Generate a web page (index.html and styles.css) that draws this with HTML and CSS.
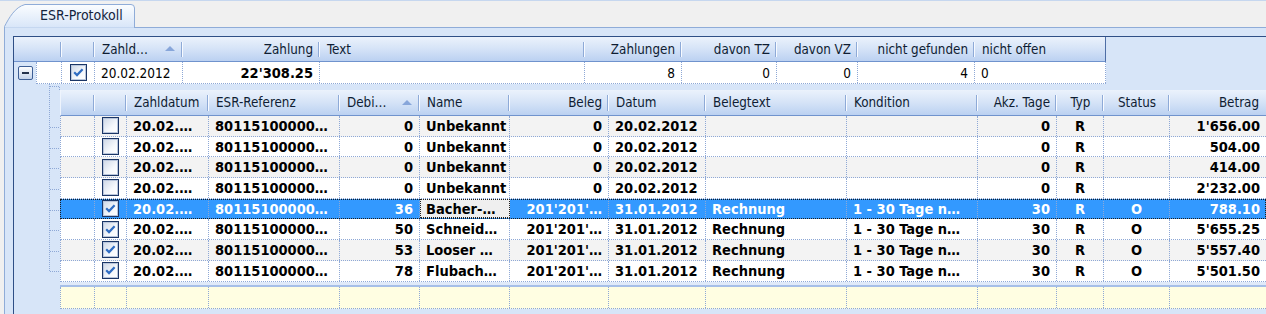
FILE: index.html
```html
<!DOCTYPE html>
<html>
<head>
<meta charset="utf-8">
<link rel="stylesheet" href="styles.css">
</head>
<body>
<div class="tabstrip">
  <div class="tab">
    <svg class="tabshape" width="132" height="24" viewBox="0 0 132 24">
      <defs>
        <linearGradient id="tg" x1="0" y1="0" x2="0" y2="1">
          <stop offset="0" stop-color="#fbfdff"/>
          <stop offset="1" stop-color="#d7e5f8"/>
        </linearGradient>
      </defs>
      <path d="M0.5 24 L0.5 22.5 C5 14 11 3 21 0.5 L127 0.5 Q130.5 0.5 130.5 4 L130.5 24 Z" fill="url(#tg)" stroke="#8facd8"/>
      <path d="M1 24 L130 24" stroke="#d7e5f8"/>
    </svg>
    <span class="tablabel">ESR-Protokoll</span>
  </div>
</div>
<div class="panel">
  <div class="grid">
    <div class="phead">
      <div class="hc pw0"></div>
      <div class="hc pw1"></div>
      <div class="hc pw2 sort"><span>Zahld…</span><i class="arrow"></i></div>
      <div class="hc pw3 r">Zahlung</div>
      <div class="hc pw4">Text</div>
      <div class="hc pw5 r">Zahlungen</div>
      <div class="hc pw6 r">davon TZ</div>
      <div class="hc pw7 r">davon VZ</div>
      <div class="hc pw8 r">nicht gefunden</div>
      <div class="hc pw9 last">nicht offen</div>
    </div>
    <div class="pwrap">
      <div class="exp"><span class="expbox"><span class="minus"></span></span></div>
      <div class="prow">
        <div class="c pd0"></div>
        <div class="c pw1 ctr nopad"><span class="cb"><svg width="13" height="13" viewBox="0 0 13 13"><path d="M2.2 6.3 L5 9.1 L10.6 3.2" fill="none" stroke="#2f6cc2" stroke-width="2.2"/></svg></span></div>
        <div class="c pw2">20.02.2012</div>
        <div class="c pw3 r b">22'308.25</div>
        <div class="c pw4"></div>
        <div class="c pw5 r">8</div>
        <div class="c pw6 r">0</div>
        <div class="c pw7 r">0</div>
        <div class="c pw8 r">4</div>
        <div class="c pw9">0</div>
      </div>
    </div>
    <div class="child">
      <svg class="tree" width="46" height="200" viewBox="0 0 46 200">
        <g stroke="#8ea8d6" stroke-width="1" stroke-dasharray="1 1" fill="none" shape-rendering="crispEdges">
          <path d="M35.5 0 V188"/>
          <path d="M35.5 2.5 H46"/>
          <path d="M45.5 2.5 V6"/>
          <path d="M36 43.5 H46"/>
          <path d="M36 64.5 H46"/>
          <path d="M36 84.5 H46"/>
          <path d="M36 105.5 H46"/>
          <path d="M36 126.5 H46"/>
          <path d="M36 146.5 H46"/>
          <path d="M36 167.5 H46"/>
          <path d="M36 187.5 H46"/>
        </g>
      </svg>
      <div class="cgrid">
        <div class="chead">
          <div class="hc k0"></div>
          <div class="hc k1"></div>
          <div class="hc k2">Zahldatum</div>
          <div class="hc k3">ESR-Referenz</div>
          <div class="hc k4 sort"><span>Debi…</span><i class="arrow"></i></div>
          <div class="hc k5">Name</div>
          <div class="hc k6 r">Beleg</div>
          <div class="hc k7">Datum</div>
          <div class="hc k8">Belegtext</div>
          <div class="hc k9">Kondition</div>
          <div class="hc k10 r">Akz. Tage</div>
          <div class="hc k11 ctr">Typ</div>
          <div class="hc k12 ctr">Status</div>
          <div class="hc k13 r last">Betrag</div>
        </div>

        <div class="row alt">
          <div class="c k0"></div>
          <div class="c k1 ctr nopad"><span class="cb"></span></div>
          <div class="c k2">20.02.…</div>
          <div class="c k3">80115100000…</div>
          <div class="c k4 r">0</div>
          <div class="c k5">Unbekannt</div>
          <div class="c k6 r">0</div>
          <div class="c k7">20.02.2012</div>
          <div class="c k8"></div>
          <div class="c k9"></div>
          <div class="c k10 r">0</div>
          <div class="c k11 ctr">R</div>
          <div class="c k12 ctr"></div>
          <div class="c k13 r">1'656.00</div>
        </div>
        <div class="row">
          <div class="c k0"></div>
          <div class="c k1 ctr nopad"><span class="cb"></span></div>
          <div class="c k2">20.02.…</div>
          <div class="c k3">80115100000…</div>
          <div class="c k4 r">0</div>
          <div class="c k5">Unbekannt</div>
          <div class="c k6 r">0</div>
          <div class="c k7">20.02.2012</div>
          <div class="c k8"></div>
          <div class="c k9"></div>
          <div class="c k10 r">0</div>
          <div class="c k11 ctr">R</div>
          <div class="c k12 ctr"></div>
          <div class="c k13 r">504.00</div>
        </div>
        <div class="row alt">
          <div class="c k0"></div>
          <div class="c k1 ctr nopad"><span class="cb"></span></div>
          <div class="c k2">20.02.…</div>
          <div class="c k3">80115100000…</div>
          <div class="c k4 r">0</div>
          <div class="c k5">Unbekannt</div>
          <div class="c k6 r">0</div>
          <div class="c k7">20.02.2012</div>
          <div class="c k8"></div>
          <div class="c k9"></div>
          <div class="c k10 r">0</div>
          <div class="c k11 ctr">R</div>
          <div class="c k12 ctr"></div>
          <div class="c k13 r">414.00</div>
        </div>
        <div class="row">
          <div class="c k0"></div>
          <div class="c k1 ctr nopad"><span class="cb"></span></div>
          <div class="c k2">20.02.…</div>
          <div class="c k3">80115100000…</div>
          <div class="c k4 r">0</div>
          <div class="c k5">Unbekannt</div>
          <div class="c k6 r">0</div>
          <div class="c k7">20.02.2012</div>
          <div class="c k8"></div>
          <div class="c k9"></div>
          <div class="c k10 r">0</div>
          <div class="c k11 ctr">R</div>
          <div class="c k12 ctr"></div>
          <div class="c k13 r">2'232.00</div>
        </div>
        <div class="row sel">
          <div class="c k0"></div>
          <div class="c k1 ctr nopad"><span class="cb"><svg width="13" height="13" viewBox="0 0 13 13"><path d="M2.2 6.3 L5 9.1 L10.6 3.2" fill="none" stroke="#2f6cc2" stroke-width="2.2"/></svg></span></div>
          <div class="c k2">20.02.…</div>
          <div class="c k3">80115100000…</div>
          <div class="c k4 r">36</div>
          <div class="c k5 focus">Bacher-…</div>
          <div class="c k6 r">201'201'…</div>
          <div class="c k7">31.01.2012</div>
          <div class="c k8">Rechnung</div>
          <div class="c k9">1 - 30 Tage n…</div>
          <div class="c k10 r">30</div>
          <div class="c k11 ctr">R</div>
          <div class="c k12 ctr">O</div>
          <div class="c k13 r">788.10</div>
        </div>
        <div class="row">
          <div class="c k0"></div>
          <div class="c k1 ctr nopad"><span class="cb"><svg width="13" height="13" viewBox="0 0 13 13"><path d="M2.2 6.3 L5 9.1 L10.6 3.2" fill="none" stroke="#2f6cc2" stroke-width="2.2"/></svg></span></div>
          <div class="c k2">20.02.…</div>
          <div class="c k3">80115100000…</div>
          <div class="c k4 r">50</div>
          <div class="c k5">Schneid…</div>
          <div class="c k6 r">201'201'…</div>
          <div class="c k7">31.01.2012</div>
          <div class="c k8">Rechnung</div>
          <div class="c k9">1 - 30 Tage n…</div>
          <div class="c k10 r">30</div>
          <div class="c k11 ctr">R</div>
          <div class="c k12 ctr">O</div>
          <div class="c k13 r">5'655.25</div>
        </div>
        <div class="row alt">
          <div class="c k0"></div>
          <div class="c k1 ctr nopad"><span class="cb"><svg width="13" height="13" viewBox="0 0 13 13"><path d="M2.2 6.3 L5 9.1 L10.6 3.2" fill="none" stroke="#2f6cc2" stroke-width="2.2"/></svg></span></div>
          <div class="c k2">20.02.…</div>
          <div class="c k3">80115100000…</div>
          <div class="c k4 r">53</div>
          <div class="c k5">Looser …</div>
          <div class="c k6 r">201'201'…</div>
          <div class="c k7">31.01.2012</div>
          <div class="c k8">Rechnung</div>
          <div class="c k9">1 - 30 Tage n…</div>
          <div class="c k10 r">30</div>
          <div class="c k11 ctr">R</div>
          <div class="c k12 ctr">O</div>
          <div class="c k13 r">5'557.40</div>
        </div>
        <div class="row">
          <div class="c k0"></div>
          <div class="c k1 ctr nopad"><span class="cb"><svg width="13" height="13" viewBox="0 0 13 13"><path d="M2.2 6.3 L5 9.1 L10.6 3.2" fill="none" stroke="#2f6cc2" stroke-width="2.2"/></svg></span></div>
          <div class="c k2">20.02.…</div>
          <div class="c k3">80115100000…</div>
          <div class="c k4 r">78</div>
          <div class="c k5">Flubach…</div>
          <div class="c k6 r">201'201'…</div>
          <div class="c k7">31.01.2012</div>
          <div class="c k8">Rechnung</div>
          <div class="c k9">1 - 30 Tage n…</div>
          <div class="c k10 r">30</div>
          <div class="c k11 ctr">R</div>
          <div class="c k12 ctr">O</div>
          <div class="c k13 r">5'501.50</div>
        </div>

        <div class="newsep"></div>
        <div class="row newrow">
          <div class="c k0"></div>
          <div class="c k1"></div>
          <div class="c k2"></div>
          <div class="c k3"></div>
          <div class="c k4"></div>
          <div class="c k5"></div>
          <div class="c k6"></div>
          <div class="c k7"></div>
          <div class="c k8"></div>
          <div class="c k9"></div>
          <div class="c k10"></div>
          <div class="c k11"></div>
          <div class="c k12"></div>
          <div class="c k13"></div>
        </div>
      </div>
    </div>
  </div>
</div>
</body>
</html>
```

FILE: styles.css
```css
* { box-sizing: border-box; }
html, body { margin: 0; padding: 0; }
body {
  width: 1266px;
  height: 314px;
  overflow: hidden;
  background: #f0f0f0;
  font-family: "DejaVu Sans Condensed", "DejaVu Sans", sans-serif;
  font-stretch: condensed;
  font-size: 13px;
  color: #000;
}

/* tab strip */
.tabstrip {
  height: 27px;
  border-top: 1px solid #c6d7ef;
  padding: 3px 0 0 4px;
  display: flex;
}
.tab {
  position: relative;
  z-index: 1;
  width: 132px;
  height: 24px;
  flex: none;
}
.tabshape { position: absolute; left: 0; top: 0; display: block; }
.tablabel {
  position: relative;
  display: block;
  padding-left: 36px;
  line-height: 23px;
  font-size: 14px;
  color: #14243d;
}

/* panel + grid */
.panel {
  height: 287px;
  margin-left: 4px;
  border-left: 1px solid #8facd8;
  border-top: 1px solid #8facd8;
  background: #d7e5f8;
  padding: 8px 0 0 8px;
}
.grid {
  height: 100%;
  width: 1262px;
  border-left: 1px solid #2f4f86;
  border-top: 1px solid #2f4f86;
  background: #d7e5f8;
  overflow: hidden;
}

/* headers */
.phead, .chead {
  display: flex;
  background: linear-gradient(#ebf2fc, #d5e3f7 50%, #bbd1f1);
  border-bottom: 1px solid #7093cd;
  color: #0f1d33;
  font-size: 13.3px;
}
.phead { height: 25px; width: 1092px; border-right: 1px solid #4e6ea6; }
.chead { height: 26px; border-left: 1px solid #eef4fd; }
.hc {
  position: relative;
  flex: none;
  display: flex;
  align-items: center;
  padding: 0 7px;
  white-space: nowrap;
  overflow: hidden;
}
.hc::after {
  content: "";
  position: absolute;
  right: 1px;
  top: 5px;
  bottom: 4px;
  width: 1px;
  background: #8eaad7;
  box-shadow: 1px 0 0 #f7faff;
}
.hc.last::after { display: none; }
.hc.r { justify-content: flex-end; }
.hc.ctr { justify-content: center; }
.hc.sort { justify-content: space-between; }
.arrow {
  width: 0;
  height: 0;
  border-left: 5px solid transparent;
  border-right: 5px solid transparent;
  border-bottom: 5px solid #87a6da;
  margin-right: 1px;
  margin-top: -1px;
}

/* parent columns */
.pw0 { width: 48px; }
.pd0 { width: 25px; }
.pw1 { width: 33px; }
.pw2 { width: 88px; }
.pw3 { width: 137px; }
.pw4 { width: 265px; }
.pw5 { width: 97px; }
.pw6 { width: 95px; }
.pw7 { width: 81px; }
.pw8 { width: 117px; }
.pw9 { width: 131px; }
.phead .pw9 { width: 130px; }

/* parent row */
.pwrap { display: flex; height: 22px; }
.exp {
  width: 22px;
  flex: none;
  display: flex;
  align-items: center;
  justify-content: center;
}
.expbox {
  width: 15px;
  height: 14px;
  border: 1px solid #3d5e95;
  border-radius: 2px;
  background: linear-gradient(#fefefe, #c4d4ec);
  display: flex;
  align-items: center;
  justify-content: center;
}
.minus { width: 7px; height: 2px; background: #22324d; }
.prow {
  display: flex;
  width: 1070px;
  background: #fff;
  border-left: 1px dotted #8ea8d6;
  border-bottom: 1px dotted #8ea8d6;
  font-size: 13.5px;
}
.c {
  flex: none;
  display: flex;
  align-items: center;
  padding: 0 6px;
  border-right: 1px dotted #8ea8d6;
  white-space: nowrap;
  overflow: hidden;
}
.c.r { justify-content: flex-end; }
.c.ctr { justify-content: center; }
.c.nopad { padding: 0; }
.b { font-weight: bold; font-size: 14.5px; }

.cb {
  width: 17px;
  height: 17px;
  flex: none;
  border: 1px solid #1a3566;
  box-shadow: inset 0 0 0 1px #b9c6dc;
  background: linear-gradient(135deg, #ccd6e6, #f5f8fc 60%, #fff);
  display: flex;
  align-items: center;
  justify-content: center;
}
.cb svg { display: block; }

/* child band */
.child { display: flex; }
.tree { flex: none; display: block; }
.cgrid { flex: none; width: 1206px; padding-top: 6px; }

.k0 { width: 34px; }
.k1 { width: 32px; }
.k2 { width: 82px; }
.k3 { width: 131px; }
.k4 { width: 80px; }
.k5 { width: 90px; }
.k6 { width: 99px; }
.k7 { width: 97px; }
.k8 { width: 141px; }
.k9 { width: 131px; }
.k10 { width: 79px; }
.k11 { width: 47px; }
.k12 { width: 66px; }
.k13 { width: 96px; border-right: none; }

.row {
  display: flex;
  height: 20.7px;
  background: #fff;
  border-left: 1px dotted #8ea8d6;
  border-bottom: 1px dotted #8ea8d6;
  font-weight: bold;
  font-size: 14.5px;
}
.row.alt { background: #f3f3f3; }
.row.sel {
  background: #3399ff;
  color: #fff;
  outline: 1px dotted #1d1d1d;
  outline-offset: -1px;
}
.c.focus {
  background: #efefef;
  color: #000;
  outline: 1px dotted #222;
  outline-offset: -1px;
}
.newsep {
  height: 5.7px;
  background: #e0eaf9;
  border-bottom: 2px solid #a6bfe8;
}
.row.newrow { height: 22.3px; background: #fffee2; }
```
